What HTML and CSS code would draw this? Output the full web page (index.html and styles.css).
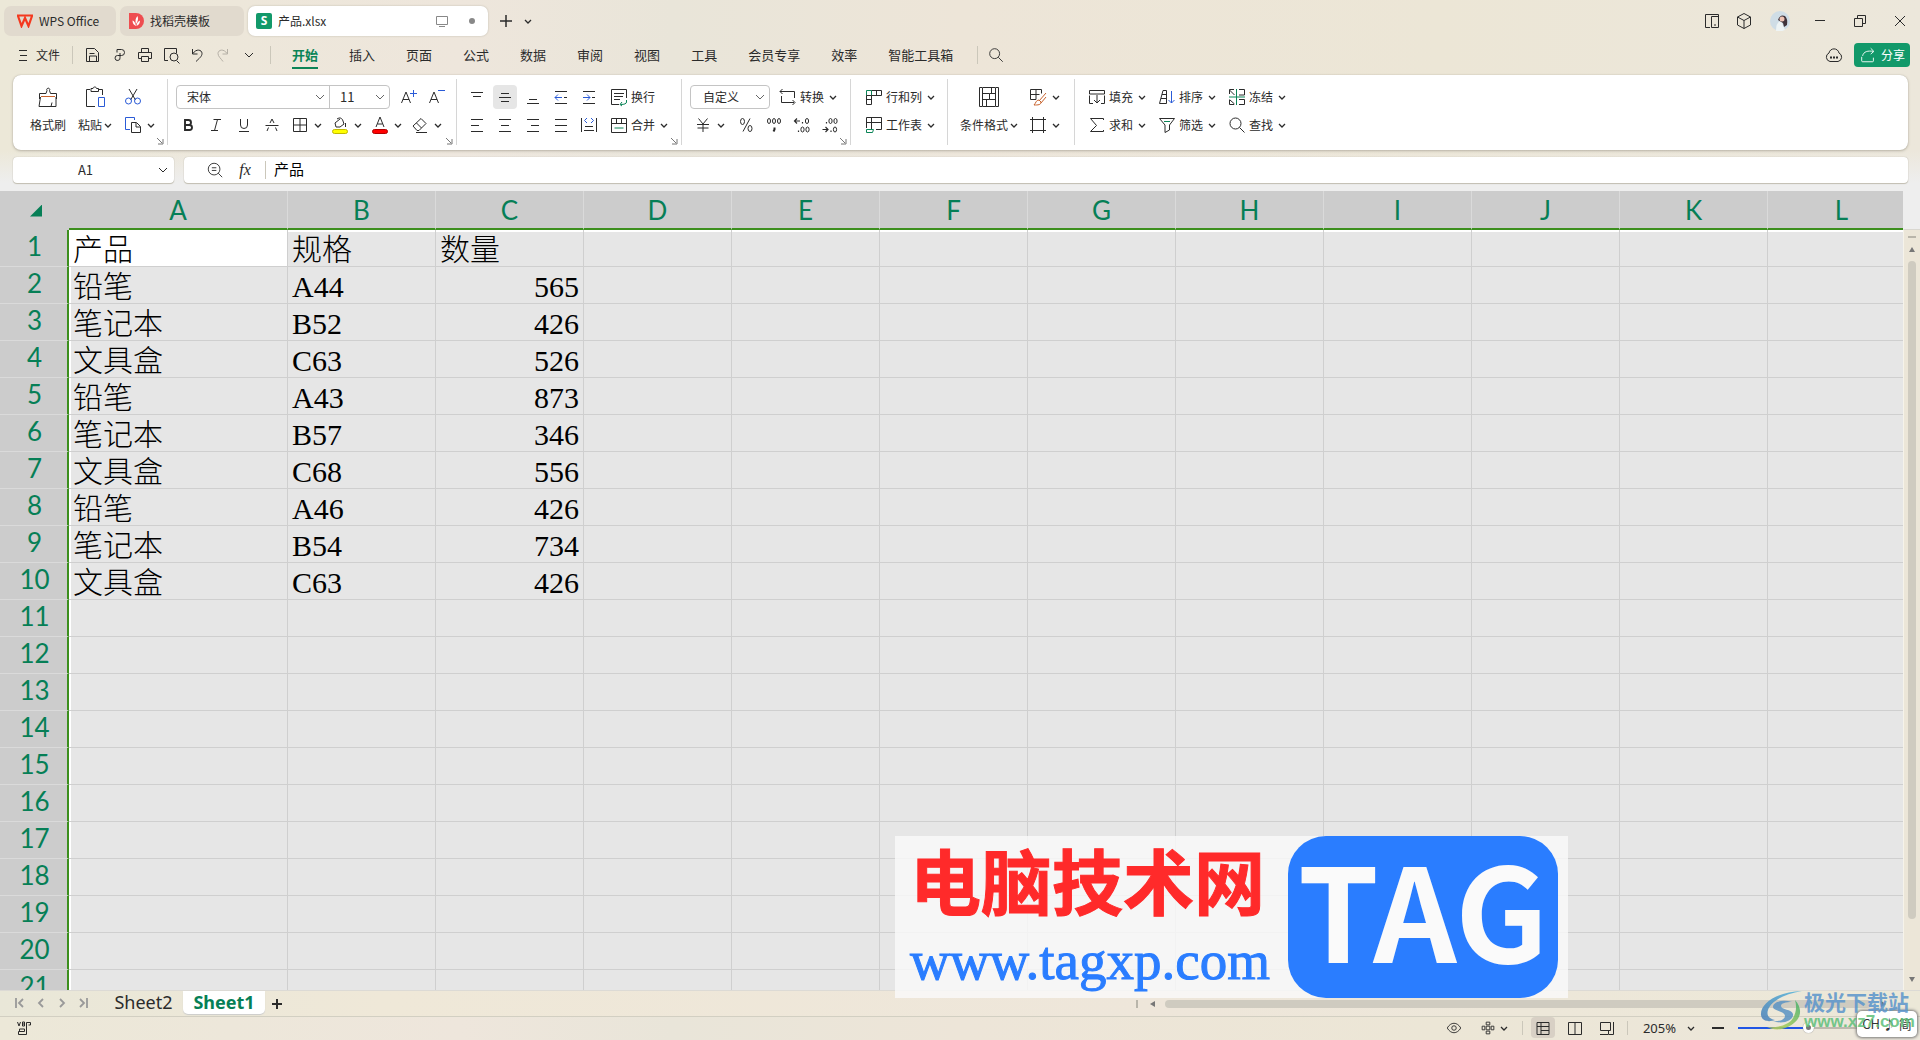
FILE: index.html
```html
<!DOCTYPE html>
<html lang="zh-CN">
<head>
<meta charset="utf-8">
<title>产品.xlsx - WPS Office</title>
<link rel="stylesheet" href="styles.css">
</head>
<body>
<svg class="sprite" aria-hidden="true">
  <symbol id="chev" viewBox="0 0 8 8"><path d="M1 3l3 3 3-3" stroke-width="1.300"/></symbol>
  <symbol id="launch" viewBox="0 0 8 8"><path d="M1 1l5 5M7 2v5H2"/></symbol>
  <symbol id="save" viewBox="0 0 20 20"><path d="M3.500 3.500h8l4 4v9h-12zM6.500 16v-5h7v5M6.500 8.500h5"/></symbol>
  <symbol id="link" viewBox="0 0 20 20"><path d="M8 7.500V4.500h4.500a3 3 0 0 1 0 6H10M11 8v4.500a2.500 2.500 0 1 1-2.500-2H11" /></symbol>
  <symbol id="print" viewBox="0 0 20 20"><path d="M6.500 7V3.500h7V7M6 13.500H3.500v-6h13v6H14M6.500 11.500h7v5h-7z"/></symbol>
  <symbol id="preview" viewBox="0 0 20 20"><path d="M7 15.500H3.500v-12h12V8M16 16l2.500 2.500"/><circle cx="13" cy="12" r="4"/></symbol>
  <symbol id="undo" viewBox="0 0 20 20"><path d="M5.500 4v5h5M6 8.500c3-5 9-4 9 0 0 3-3 5-6 8"/></symbol>
  <symbol id="redo" viewBox="0 0 20 20"><path d="M14.500 4v5h-5M14 8.500c-3-5-9-4-9 0 0 3 3 5 5 8"/></symbol>
  <symbol id="search" viewBox="0 0 20 20"><circle cx="8.500" cy="8.500" r="5.500"/><path d="M12.500 12.500l5 5"/></symbol>
  <symbol id="brush" viewBox="0 0 24 24"><path d="M3.500 14V8.500h6.500l1-3a1.500 1.500 0 1 1 2.500 0l1 3h6V14M4.500 12L3 21.500h17V12M15 21.500l1-4"/><path class="o" d="M5 11.500h14"/></symbol>
  <symbol id="paste" viewBox="0 0 24 24"><path d="M7 4.500H3.500v17H12M16 4.500h3.500V10M8 6.500v-3h2c0-2 3.500-2 3.500 0h2v3z"/><path class="b" d="M15.500 12.500h6v9h-6z"/></symbol>
  <symbol id="cut" viewBox="0 0 20 20"><path d="M6 2l6.500 11M14 2L7.500 13"/><circle class="b" cx="5.500" cy="14" r="3"/><circle class="b" cx="14.500" cy="14" r="3"/></symbol>
  <symbol id="copy" viewBox="0 0 20 20"><path class="b" d="M7 14.500H2.500v-12h9V5"/><path d="M8.500 7.500h5l4 4v6h-9zM13 8v4h4"/></symbol>
  <symbol id="aup" viewBox="0 0 20 20"><path d="M3.500 16L8 5l4.500 11M5 12.500h6"/><path class="b" d="M12 6.500h7M15.500 3v7"/></symbol>
  <symbol id="adn" viewBox="0 0 20 20"><path d="M3.500 16L8 5l4.500 11M5 12.500h6"/><path class="b" d="M12 3.500h7"/></symbol>
  <symbol id="bold" viewBox="0 0 20 20"><path d="M7 5h3.500a2.500 2.500 0 0 1 0 5H7zM7 10h4.500a2.500 2.500 0 0 1 0 5H7z" stroke-width="1.900"/></symbol>
  <symbol id="ital" viewBox="0 0 20 20"><path d="M7.500 4.500H15M5 15.500h7M11.500 4.500l-3 11"/></symbol>
  <symbol id="under" viewBox="0 0 20 20"><path d="M6.500 4v6a3.500 3.500 0 0 0 7 0V4M5 16.500h10"/></symbol>
  <symbol id="strike" viewBox="0 0 20 20"><path d="M3.500 10.500h13M8 8l2-4 2 4M6.500 12.500L5 16M13.500 12.500L15 16"/></symbol>
  <symbol id="border" viewBox="0 0 20 20"><path d="M3.500 3.500h13v13h-13zM10 3.500v13M3.500 10h13"/></symbol>
  <symbol id="fill" viewBox="0 0 20 20"><path d="M7 4c3-2 5-1 6 2l1 3-4 3H6L5 8l5-4M15.500 8v4"/><rect x="2.500" y="14.500" width="15" height="4" rx="2" fill="#ff0" stroke="#c2b900"/></symbol>
  <symbol id="fcol" viewBox="0 0 20 20"><path d="M6 12l4-10 4 10M7.500 9h5"/><rect x="2.500" y="14.500" width="15" height="4" rx="2" fill="#f00" stroke="#b00000"/></symbol>
  <symbol id="erase" viewBox="0 0 20 20"><path d="M3 11l8-7.500 5 5L9 15.500H7zM6.500 8l5 5M6 17.500h11"/></symbol>
  <symbol id="atop" viewBox="0 0 20 20"><path d="M4 5.500h12M6 9.500h8"/></symbol>
  <symbol id="amid" viewBox="0 0 20 20"><path d="M6 6.500h8M4 10.500h12M6 14.500h8"/></symbol>
  <symbol id="abot" viewBox="0 0 20 20"><path d="M6 12.500h8M4 16.500h12"/></symbol>
  <symbol id="al" viewBox="0 0 20 20"><path d="M4 4.500h12M4 10.500h8M4 16.500h12"/></symbol>
  <symbol id="ac" viewBox="0 0 20 20"><path d="M4 4.500h12M6 10.500h8M4 16.500h12"/></symbol>
  <symbol id="ar" viewBox="0 0 20 20"><path d="M4 4.500h12M8 10.500h8M4 16.500h12"/></symbol>
  <symbol id="aj" viewBox="0 0 20 20"><path d="M4 4.500h12M4 10.500h12M4 16.500h12"/></symbol>
  <symbol id="ad" viewBox="0 0 20 20"><path d="M2.500 3v14M17.500 3v14M6 11.500h8M5 15.500h10"/><path class="b" d="M8 3L5.500 5.500 8 8M12 3l2.500 2.500L12 8"/></symbol>
  <symbol id="ind1" viewBox="0 0 20 20"><path d="M4 4.500h12M4 16.500h12M13 10.500h3"/><path class="b" d="M11 10.500H4M7 7.500l-3 3 3 3"/></symbol>
  <symbol id="ind2" viewBox="0 0 20 20"><path d="M4 4.500h12M4 16.500h12M13 10.500h3"/><path class="b" d="M4 10.500h7M8 7.500l3 3-3 3"/></symbol>
  <symbol id="wrap" viewBox="0 0 20 20"><path d="M10 17.500H2.500v-15h15V11M5 6.500h10M5 9.500h9M5 12.500h6"/><path class="g" d="M17.500 13v2q0 2.500-6 2.500M13 15l-2 2.500 2 1.500"/></symbol>
  <symbol id="merge" viewBox="0 0 20 20"><path d="M2.500 3.500h15v14h-15zM2.500 8.500h15M7.500 3.500v5M12.500 3.500v5"/><path class="g" d="M5.500 13h9"/></symbol>
  <symbol id="conv" viewBox="0 0 20 20"><path d="M3.500 9v6.500H16M2 4.500h14.500V11M4.500 2L2 4.500 4.500 7M14.500 13l2.500 2.500-2.500 2.500"/></symbol>
  <symbol id="yen" viewBox="0 0 20 20"><path d="M5.500 3.500L10 9l4.500-5.500M10 9v8M4 9.500h12M4.500 13h11"/></symbol>
  <symbol id="pct" viewBox="0 0 20 20"><path d="M14 3.500L7 16.500"/><ellipse cx="6.500" cy="6.500" rx="2" ry="3"/><ellipse cx="14" cy="13.500" rx="2" ry="3"/></symbol>
  <symbol id="thou" viewBox="0 0 20 20"><ellipse cx="5" cy="6" rx="1.500" ry="2.500"/><ellipse cx="10" cy="6" rx="1.500" ry="2.500"/><ellipse cx="15" cy="6" rx="1.500" ry="2.500"/><path d="M10.500 12.500v2l-1 2" stroke-width="2"/></symbol>
  <symbol id="dec1" viewBox="0 0 20 20"><path d="M3 6h5M5 3.500L2.500 6 5 8.500M10.500 7v1.500M6.500 15.500v1.500" stroke-width="1.200"/><ellipse cx="15" cy="6" rx="1.600" ry="2.500"/><ellipse cx="10.500" cy="14.500" rx="1.600" ry="2.500"/><ellipse cx="15.500" cy="14.500" rx="1.600" ry="2.500"/></symbol>
  <symbol id="dec2" viewBox="0 0 20 20"><path d="M2.500 14.500h5M5.500 12l2.500 2.500L5.500 17M6.500 7v1.500M11 15.500v1.500" stroke-width="1.200"/><ellipse cx="10.500" cy="6" rx="1.600" ry="2.500"/><ellipse cx="15.500" cy="6" rx="1.600" ry="2.500"/><ellipse cx="15" cy="14.500" rx="1.600" ry="2.500"/></symbol>
  <symbol id="rc" viewBox="0 0 20 20"><path class="g" d="M2.500 3.500h5v5h-5z"/><path d="M7.500 3.500h10v5h-10M12.500 3.500v5M2.500 8.500h5v9h-5zM2.500 12.500h5"/></symbol>
  <symbol id="ws" viewBox="0 0 20 20"><path d="M2.500 13V2.500h15v12H12M2.500 7.500h15M7.500 2.500V14"/><path class="g" d="M2.500 14.500h7l-1 3h-6z"/></symbol>
  <symbol id="cf" viewBox="0 0 24 24"><path d="M5 2.500H2.500v19H5M19 2.500h2.500v19H19M5.500 2.500h13v19h-13zM5.500 8.500h7v6h6M5.500 14.500h7M12.500 8.500h6M9.500 14.500v7M14.500 2.500v6"/></symbol>
  <symbol id="tstyle" viewBox="0 0 20 20"><path d="M8 12.500H2.500v-10h11v4M2.500 7.500h9M8 2.500v10"/><path class="o" d="M18 6l-7 8M18 10l-5 6M11 13c-3 0-3 3-5 5 4 0 7 0 7-3z"/></symbol>
  <symbol id="frame" viewBox="0 0 20 20"><path d="M4.500 2v16M15.500 2v16M2 4.500h16M2 15.500h16"/></symbol>
  <symbol id="filld" viewBox="0 0 20 20"><path d="M6 16.500H2.500v-8M14 16.500h3.500v-8M2.500 7V3.500h15V7zM10 8v8M7 13l3 3 3-3"/></symbol>
  <symbol id="sum" viewBox="0 0 20 20"><path d="M16.500 5V3.500h-13l6 7-6 6h13V15"/></symbol>
  <symbol id="sort" viewBox="0 0 20 20"><path d="M2.500 16.500L6 3.500h3.500v13zM4 11.500h5.500M5 7.500h4.500"/><path class="b" d="M14.500 4v12M11.500 13l3 3 3-3"/></symbol>
  <symbol id="filter" viewBox="0 0 20 20"><path d="M2.500 3.500h15L12.500 10v5L8 17.500V10z"/><path class="g" d="M7 6.500h6"/></symbol>
  <symbol id="freeze" viewBox="0 0 20 20"><path d="M2.500 7V2.500H7M2.500 3l5 5M12 2.500h5.500V8H12M2.500 12.500v5H7M3 13l4.500 4M12 12.500h5.500v5H12"/><path class="g" d="M9.500 2v16M2 10h16"/></symbol>
  <symbol id="zoomo" viewBox="0 0 20 20"><circle cx="9" cy="9" r="6.500"/><path d="M13.500 13.500l4.500 4.500M6.500 7.500h5M6.500 10.500h5"/></symbol>
  <symbol id="cloud" viewBox="0 0 20 20"><path d="M6 16.500a4.500 4.500 0 0 1-1-8.500c1-5.500 9-5.500 10 0a4.500 4.500 0 0 1-1 8.500z"/><path d="M6 12.500h2M9 12.500h2M12 12.500h2" stroke-width="2"/></symbol>
  <symbol id="share" viewBox="0 0 20 20"><path d="M3 12v4.500q0 1 1 1h11q1 0 1-1V13M4 11c1-5 6-6 12-5M13 2.500L16.500 6 13 9"/></symbol>
  <symbol id="panel" viewBox="0 0 20 20"><path d="M8 16.500H3.500v-13h13v13H9.500V5.500h7M12 14h2"/></symbol>
  <symbol id="cube" viewBox="0 0 20 20"><path d="M10 2.500l6.500 3.500v8L10 17.500 3.500 14V6zM3.500 6l6.500 3.500L16.500 6M10 9.500v8"/></symbol>
  <symbol id="screen" viewBox="0 0 14 14"><path d="M1.500 2.500h11v8h-11zM4 12.500h6"/></symbol>
  <symbol id="restore" viewBox="0 0 14 14"><path d="M1.500 4.500h8v8h-8zM4.500 4V1.500h8v8H10"/></symbol>
  <symbol id="x" viewBox="0 0 14 14"><path d="M2 2l10 10M12 2L2 12"/></symbol>
  <symbol id="eye" viewBox="0 0 20 20"><path d="M2.500 10c4-7 11-7 15 0-4 7-11 7-15 0z"/><circle cx="10" cy="10" r="2.500"/></symbol>
  <symbol id="move" viewBox="0 0 20 20"><path d="M8 3.500h4v3H8zM8 13.500h4v3H8zM3.500 8h3v4h-3zM13.500 8h3v4h-3zM8 8h4v4H8z"/></symbol>
  <symbol id="v1" viewBox="0 0 20 20"><path d="M4 4.500h12v12H4zM4 8.500h12M8 4.500v12M8 12.500h8"/></symbol>
  <symbol id="v2" viewBox="0 0 20 20"><path d="M3.500 4.500h13v12h-13zM10 4.500v12"/></symbol>
  <symbol id="v3" viewBox="0 0 20 20"><path d="M3.500 4.500h10v8h-10zM16.500 4v12.500h-5v-4M3 16.500h8"/></symbol>
  <symbol id="vb" viewBox="0 0 16 16"><path d="M1.500 2l1.500 4 1.500-4M6.500 2h2v4h-2zM6.500 4h2M10.500 14.500v-12h4V5h-2M10.500 14.500h-8v-3h6V9h-5v2"/></symbol>
</svg>

<header class="titlebar">
  <nav class="doc-tabs">
    <button class="doc-tab home"><svg width="18" height="14" viewBox="0 0 18 14"><path d="M1 1.500h16M2 2l3.500 10L9 4l3.500 8L16 2" fill="none" stroke="#f4391f" stroke-width="2.200"/></svg>WPS Office</button>
    <button class="doc-tab shell"><svg width="16" height="16" viewBox="0 0 16 16"><path d="M1 0h7a8 8 0 0 1 0 16H1z" fill="#ee4d50"/><path d="M8 13Q4.500 11.500 4.500 7.500 7 8 8 13zM8 11Q6.500 6 9.500 3q1.500 4-1.500 8zM8.500 13q0-4 3.500-5.500 0 4-3.500 5.500z" fill="#fff"/></svg>找稻壳模板</button>
    <button class="doc-tab current"><span class="s-logo">S</span>产品.xlsx<svg class="i push" width="14" height="14"><use href="#screen"/></svg><i class="dot"></i></button>
  </nav>
  <button class="plain plus" aria-label="新建"><svg class="i" width="14" height="14" viewBox="0 0 14 14"><path d="M7 1v12M1 7h12" stroke-width="1.500"/></svg></button>
  <button class="plain" aria-label="标签列表"><svg class="i" width="8" height="8"><use href="#chev"/></svg></button>
  <div class="window-tools">
    <button class="plain w32" aria-label="侧栏"><svg class="i" width="20" height="20"><use href="#panel"/></svg></button>
    <button class="plain w32" aria-label="应用"><svg class="i" width="20" height="20"><use href="#cube"/></svg></button>
    <button class="plain w40" aria-label="账户"><svg width="20" height="20" viewBox="0 0 20 20"><circle cx="10" cy="10" r="10" fill="#cfdde6"/><path d="M6 20q0-9 5-10l4 9q-4 2-9 1" fill="#eef4f5"/><path d="M8 9q2-6 7-4 3 3 2 9l-3 2-1-4z" fill="#40333a"/><circle cx="12" cy="8" r="2.500" fill="#efc4b5"/></svg></button>
    <button class="plain w40" aria-label="最小化"><svg class="i" width="10" height="14" viewBox="0 0 10 14"><path d="M0 6.500h10"/></svg></button>
    <button class="plain w40" aria-label="还原"><svg class="i" width="14" height="14"><use href="#restore"/></svg></button>
    <button class="plain w40" aria-label="关闭"><svg class="i" width="14" height="14"><use href="#x"/></svg></button>
  </div>
</header>

<div class="menubar">
  <button class="plain file"><svg class="i" width="10" height="12" viewBox="0 0 10 12"><path d="M1 1.500h8M2 6.500h7M1 11.500h8"/></svg>文件</button>
  <i class="rule"></i>
  <div class="quick">
    <button class="plain" aria-label="保存"><svg class="i" width="20" height="20"><use href="#save"/></svg></button>
    <button class="plain" aria-label="输出"><svg class="i" width="20" height="20"><use href="#link"/></svg></button>
    <button class="plain" aria-label="打印"><svg class="i" width="20" height="20"><use href="#print"/></svg></button>
    <button class="plain" aria-label="预览"><svg class="i" width="20" height="20"><use href="#preview"/></svg></button>
    <button class="plain" aria-label="撤销"><svg class="i" width="20" height="20"><use href="#undo"/></svg></button>
    <button class="plain faded" aria-label="恢复"><svg class="i" width="20" height="20"><use href="#redo"/></svg></button>
    <button class="plain" aria-label="更多"><svg class="i" width="10" height="10" viewBox="0 0 10 10"><path d="M1 3l4 4 4-4"/></svg></button>
  </div>
  <i class="rule"></i>
  <nav class="tabs">
    <button class="plain on">开始</button><button class="plain">插入</button><button class="plain">页面</button><button class="plain">公式</button><button class="plain">数据</button><button class="plain">审阅</button><button class="plain">视图</button><button class="plain">工具</button><button class="plain">会员专享</button><button class="plain">效率</button><button class="plain">智能工具箱</button>
  </nav>
  <i class="rule"></i>
  <button class="plain find" aria-label="搜索"><svg class="i" width="18" height="18"><use href="#search"/></svg></button>
  <div class="menu-right">
    <button class="plain" aria-label="云"><svg class="i" width="20" height="20"><use href="#cloud"/></svg></button>
    <button class="share"><svg class="i" width="18" height="18"><use href="#share"/></svg>分享</button>
  </div>
</div>

<section class="ribbon" aria-label="开始">
  <div class="group g1">
    <div class="col brush"><button class="cmd" aria-label="格式刷图标"><svg class="i" width="24" height="24"><use href="#brush"/></svg></button><button class="cmd">格式刷</button></div>
    <div class="col pst"><button class="cmd" aria-label="粘贴图标"><svg class="i" width="24" height="24"><use href="#paste"/></svg></button><button class="cmd">粘贴<svg class="i c" width="8" height="8"><use href="#chev"/></svg></button></div>
    <div class="col start"><button class="cmd b28" aria-label="剪切"><svg class="i" width="20" height="20"><use href="#cut"/></svg></button><button class="cmd b40" aria-label="复制"><svg class="i" width="20" height="20"><use href="#copy"/></svg><svg class="i c" width="8" height="8"><use href="#chev"/></svg></button></div>
    <button class="launch" aria-label="剪贴板选项"><svg class="i" width="8" height="8"><use href="#launch"/></svg></button>
  </div>
  <div class="group g2">
    <div class="line">
      <div class="combo"><select class="font" aria-label="字体"><option>宋体</option></select><select class="size" aria-label="字号"><option>11</option></select></div>
      <button class="cmd b28" aria-label="增大字号"><svg class="i" width="20" height="20"><use href="#aup"/></svg></button><button class="cmd b28" aria-label="减小字号"><svg class="i" width="20" height="20"><use href="#adn"/></svg></button>
    </div>
    <div class="line">
      <button class="cmd b28" aria-label="加粗"><svg class="i" width="20" height="20"><use href="#bold"/></svg></button><button class="cmd b28" aria-label="倾斜"><svg class="i" width="20" height="20"><use href="#ital"/></svg></button><button class="cmd b28" aria-label="下划线"><svg class="i" width="20" height="20"><use href="#under"/></svg></button><button class="cmd b28" aria-label="删除线"><svg class="i" width="20" height="20"><use href="#strike"/></svg></button><button class="cmd b40" aria-label="边框"><svg class="i" width="20" height="20"><use href="#border"/></svg><svg class="i c" width="8" height="8"><use href="#chev"/></svg></button><button class="cmd b40" aria-label="填充颜色"><svg class="i" width="20" height="20"><use href="#fill"/></svg><svg class="i c" width="8" height="8"><use href="#chev"/></svg></button><button class="cmd b40" aria-label="字体颜色"><svg class="i" width="20" height="20"><use href="#fcol"/></svg><svg class="i c" width="8" height="8"><use href="#chev"/></svg></button><button class="cmd b40" aria-label="清除"><svg class="i" width="20" height="20"><use href="#erase"/></svg><svg class="i c" width="8" height="8"><use href="#chev"/></svg></button>
    </div>
    <button class="launch" aria-label="字体设置"><svg class="i" width="8" height="8"><use href="#launch"/></svg></button>
  </div>
  <div class="group g3">
    <div class="line">
      <button class="cmd b28" aria-label="顶端对齐"><svg class="i" width="20" height="20"><use href="#atop"/></svg></button><button class="cmd b28 pressed" aria-label="垂直居中"><svg class="i" width="20" height="20"><use href="#amid"/></svg></button><button class="cmd b28" aria-label="底端对齐"><svg class="i" width="20" height="20"><use href="#abot"/></svg></button><button class="cmd b28" aria-label="减少缩进"><svg class="i" width="20" height="20"><use href="#ind1"/></svg></button><button class="cmd b28" aria-label="增加缩进"><svg class="i" width="20" height="20"><use href="#ind2"/></svg></button><button class="cmd text"><svg class="i" width="20" height="20"><use href="#wrap"/></svg>换行</button>
    </div>
    <div class="line">
      <button class="cmd b28" aria-label="左对齐"><svg class="i" width="20" height="20"><use href="#al"/></svg></button><button class="cmd b28" aria-label="居中"><svg class="i" width="20" height="20"><use href="#ac"/></svg></button><button class="cmd b28" aria-label="右对齐"><svg class="i" width="20" height="20"><use href="#ar"/></svg></button><button class="cmd b28" aria-label="两端对齐"><svg class="i" width="20" height="20"><use href="#aj"/></svg></button><button class="cmd b28" aria-label="分散对齐"><svg class="i" width="20" height="20"><use href="#ad"/></svg></button><button class="cmd text"><svg class="i" width="20" height="20"><use href="#merge"/></svg>合并<svg class="i c" width="8" height="8"><use href="#chev"/></svg></button>
    </div>
    <button class="launch" aria-label="对齐设置"><svg class="i" width="8" height="8"><use href="#launch"/></svg></button>
  </div>
  <div class="group g4">
    <div class="line">
      <div class="combo"><select class="format" aria-label="数字格式"><option>自定义</option></select></div>
      <button class="cmd text"><svg class="i" width="20" height="20"><use href="#conv"/></svg>转换<svg class="i c" width="8" height="8"><use href="#chev"/></svg></button>
    </div>
    <div class="line">
      <button class="cmd b42" aria-label="货币"><svg class="i" width="20" height="20"><use href="#yen"/></svg><svg class="i c" width="8" height="8"><use href="#chev"/></svg></button><button class="cmd b28" aria-label="百分比"><svg class="i" width="20" height="20"><use href="#pct"/></svg></button><button class="cmd b28" aria-label="千位分隔"><svg class="i" width="20" height="20"><use href="#thou"/></svg></button><button class="cmd b28" aria-label="增加小数位"><svg class="i" width="20" height="20"><use href="#dec1"/></svg></button><button class="cmd b28" aria-label="减少小数位"><svg class="i" width="20" height="20"><use href="#dec2"/></svg></button>
    </div>
    <button class="launch" aria-label="数字设置"><svg class="i" width="8" height="8"><use href="#launch"/></svg></button>
  </div>
  <div class="group g5">
    <div class="line"><button class="cmd text"><svg class="i" width="20" height="20"><use href="#rc"/></svg>行和列<svg class="i c" width="8" height="8"><use href="#chev"/></svg></button></div>
    <div class="line"><button class="cmd text"><svg class="i" width="20" height="20"><use href="#ws"/></svg>工作表<svg class="i c" width="8" height="8"><use href="#chev"/></svg></button></div>
  </div>
  <div class="group g6">
    <div class="col"><button class="cmd" aria-label="条件格式图标"><svg class="i" width="24" height="24"><use href="#cf"/></svg></button><button class="cmd">条件格式<svg class="i c" width="8" height="8"><use href="#chev"/></svg></button></div>
    <div class="col start"><button class="cmd b40" aria-label="表格样式"><svg class="i" width="20" height="20"><use href="#tstyle"/></svg><svg class="i c" width="8" height="8"><use href="#chev"/></svg></button><button class="cmd b40" aria-label="单元格样式"><svg class="i" width="20" height="20"><use href="#frame"/></svg><svg class="i c" width="8" height="8"><use href="#chev"/></svg></button></div>
  </div>
  <div class="group g7">
    <div class="line"><button class="cmd text"><svg class="i" width="20" height="20"><use href="#filld"/></svg>填充<svg class="i c" width="8" height="8"><use href="#chev"/></svg></button><button class="cmd text"><svg class="i" width="20" height="20"><use href="#sort"/></svg>排序<svg class="i c" width="8" height="8"><use href="#chev"/></svg></button><button class="cmd text"><svg class="i" width="20" height="20"><use href="#freeze"/></svg>冻结<svg class="i c" width="8" height="8"><use href="#chev"/></svg></button></div>
    <div class="line"><button class="cmd text"><svg class="i" width="20" height="20"><use href="#sum"/></svg>求和<svg class="i c" width="8" height="8"><use href="#chev"/></svg></button><button class="cmd text"><svg class="i" width="20" height="20"><use href="#filter"/></svg>筛选<svg class="i c" width="8" height="8"><use href="#chev"/></svg></button><button class="cmd text"><svg class="i" width="20" height="20"><use href="#search"/></svg>查找<svg class="i c" width="8" height="8"><use href="#chev"/></svg></button></div>
  </div>
</section>

<div class="formula-row">
  <div class="name-box"><input type="text" value="A1" aria-label="名称框"><svg class="i" width="10" height="10" viewBox="0 0 10 10"><path d="M1 3l4 4 4-4"/></svg></div>
  <div class="formula"><button class="plain" aria-label="查看"><svg class="i" width="18" height="18"><use href="#zoomo"/></svg></button><button class="plain fx">fx</button><i class="rule"></i><input type="text" value="产品" aria-label="编辑栏"></div>
</div>

<main class="sheet">
  <div class="grid-wrap"><table class="grid"></table></div>
  <div class="vscroll"><i class="tick"></i><i class="arrow up"></i><i class="thumb"></i><i class="arrow down"></i></div>
</main>

<div class="sheetbar">
  <div class="nav">
    <button class="plain" aria-label="第一张"><svg class="i" width="10" height="12" viewBox="0 0 10 12"><path d="M1 1v10M8 2L4 6l4 4" stroke-width="1.800"/></svg></button>
    <button class="plain" aria-label="上一张"><svg class="i" width="10" height="12" viewBox="0 0 10 12"><path d="M7 2L3 6l4 4" stroke-width="1.800"/></svg></button>
    <button class="plain" aria-label="下一张"><svg class="i" width="10" height="12" viewBox="0 0 10 12"><path d="M3 2l4 4-4 4" stroke-width="1.800"/></svg></button>
    <button class="plain" aria-label="最后一张"><svg class="i" width="10" height="12" viewBox="0 0 10 12"><path d="M9 1v10M2 2l4 4-4 4" stroke-width="1.800"/></svg></button>
  </div>
  <button class="sheet-tab">Sheet2</button>
  <button class="sheet-tab active">Sheet1</button>
  <button class="plain add" aria-label="新建工作表"><svg class="i" width="10" height="10" viewBox="0 0 10 10"><path d="M5 0v10M0 5h10" stroke-width="2"/></svg></button>
  <div class="hscroll"><i class="tick"></i><i class="arrow left"></i><i class="thumb"></i><i class="arrow right"></i></div>
</div>

<footer class="status">
  <button class="plain" aria-label="VB"><svg class="i" width="16" height="16"><use href="#vb"/></svg></button>
  <div class="status-right">
    <button class="plain eye" aria-label="护眼"><svg class="i" width="18" height="18"><use href="#eye"/></svg></button>
    <button class="plain mv" aria-label="定位"><svg class="i" width="18" height="18"><use href="#move"/></svg><svg class="i c" width="8" height="8"><use href="#chev"/></svg></button>
    <i class="rule"></i>
    <div class="views"><button class="plain pressed" aria-label="普通视图"><svg class="i" width="20" height="20"><use href="#v1"/></svg></button><button class="plain" aria-label="分页预览"><svg class="i" width="20" height="20"><use href="#v2"/></svg></button><button class="plain" aria-label="页面布局"><svg class="i" width="20" height="20"><use href="#v3"/></svg></button></div>
    <i class="rule"></i>
    <button class="plain pctv">205%<svg class="i" width="8" height="8"><use href="#chev"/></svg></button>
    <button class="plain" aria-label="缩小"><svg class="i" width="12" height="12" viewBox="0 0 12 12"><path d="M0 6h12" stroke-width="2"/></svg></button>
    <input class="zoom" type="range" min="0" max="100" value="51" aria-label="缩放">
  </div>
</footer>

<aside class="promo">
  <div class="promo-text"><strong>电脑技术网</strong><span>www.tagxp.com</span></div>
  <div class="promo-tag">TAG</div>
</aside>
<aside class="ime">CH ♪ 简</aside>
<aside class="site-mark">
  <svg width="44" height="42" viewBox="0 0 44 42"><defs><linearGradient id="lg1" x1="0" y1="1" x2="1" y2="0"><stop offset="0" stop-color="#4b7fb8"/><stop offset="1" stop-color="#4fb4dc"/></linearGradient><linearGradient id="lg2" x1="0" y1="1" x2="1" y2="0"><stop offset="0" stop-color="#cfd84e"/><stop offset="1" stop-color="#3fae6b"/></linearGradient></defs><path d="M42 1C16 2 0 14 1 25c1 7 9 7 14 5-5-1-9-4-7-10C11 11 24 4 42 1z" fill="url(#lg1)"/><path d="M35 10c10 11 5 24-13 29-6 1-11 0-15-2 11 1 22-2 26-9 3-5 4-11 2-18z" fill="url(#lg2)"/><path d="M32 12c-10-3-19 0-19 5 0 4 12 4 12 9 0 4-7 6-13 5 12 4 22-1 21-7-1-5-12-4-12-8 0-3 5-4 11-4z" fill="#5a93c4"/></svg>
  <div><b>极光下载站</b><span>www.xz7.com</span></div>
</aside>
<script src="grid.js"></script>
</body>
</html>
```
FILE: styles.css
```css
* { box-sizing: border-box; }
html { height: 100%; overflow: hidden; }
body {
  height: 100%; margin: 0; display: flex; flex-direction: column; position: relative; overflow: hidden;
  font: 12px/16px "Noto Sans CJK SC", sans-serif; color: #2b2b2b;
  background: linear-gradient(90deg, #ece8d8, #eee6dc 24%, #e9e5d9 35%, #ede5d8 50%, #ece6d6 75%, #ece7db);
}
button, input, select { font: inherit; color: inherit; }
button { border: 0; padding: 0; margin: 0; background: none; display: flex; align-items: center; justify-content: center; white-space: nowrap; }
input { border: 0; background: none; outline: 0; padding: 0; margin: 0; }
.sprite { position: absolute; width: 0; height: 0; }
.i, symbol { fill: none; stroke: currentColor; }
.i { flex: none; }
.b { stroke: #2a5bd7; } .g { stroke: #0b8457; } .o { stroke: #c8622c; }
.rule { width: 1px; height: 18px; background: #cbc7ba; flex: none; }

.titlebar { display: flex; align-items: center; height: 40px; padding: 2px 0 0 4px; flex: none; }
.doc-tabs { display: flex; gap: 4px; }
.doc-tab { height: 30px; border-radius: 7px; background: #e1dace; justify-content: flex-start; }
.home { width: 112px; padding-left: 12px; gap: 5px; }
.shell { width: 124px; padding-left: 8px; gap: 6px; }
.current { width: 240px; padding: 0 13px 0 8px; gap: 6px; background: #fff; box-shadow: 0 0 2px #bbb5a8; }
.s-logo { width: 16px; height: 16px; background: #12996a; color: #fff; border-radius: 2px; font: bold 12px/16px "Noto Sans", sans-serif; text-align: center; }
.push { margin-left: auto; color: #888; }
.dot { width: 6px; height: 6px; margin-left: 14px; border-radius: 50%; background: #888; }
.plus { width: 36px; }
.window-tools { display: flex; margin-left: auto; }
.w32 { width: 32px; } .w40 { width: 40px; }
.titlebar .w40, .titlebar .w32 { height: 30px; }

.menubar { display: flex; align-items: center; height: 34px; flex: none; padding: 0 10px 4px 18px; }
.file { gap: 8px; margin-right: 12px; }
.quick { display: flex; padding: 0 8px 0 7px; }
.quick button { width: 26px; }
.faded { color: #b5b0a6; }
.tabs { display: flex; gap: 31px; padding: 0 24px 0 21px; }
.tabs button { font-size: 13px; height: 28px; border-bottom: 2px solid transparent; border-top: 2px solid transparent; }
.tabs .on { color: #0b8457; font-weight: bold; border-bottom-color: #0b8457; }
.find { margin-left: 9px; }
.menu-right { display: flex; align-items: center; gap: 10px; margin-left: auto; }
.share { width: 56px; height: 24px; border-radius: 4px; gap: 4px; background: #12996a; color: #fff; }

.ribbon { display: flex; flex: none; height: 75px; margin: 1px 12px 0 13px; padding: 4px 0; background: #fff; border-radius: 8px; box-shadow: 0 0 1px #a9a494, 0 1px 3px #b9b4a6; }
.group { position: relative; flex: none; border-right: 1px solid #d6d6d6; padding-top: 4px; height: 66px; }
.g1 { display: flex; width: 155px; padding-left: 12px; }
.g2 { width: 289px; padding-left: 6px; }
.g3 { width: 225px; padding-left: 6px; }
.g4 { width: 169px; padding-left: 7px; }
.g5 { width: 97px; padding-left: 7px; }
.g6 { display: flex; width: 127px; padding-left: 12px; gap: 6px; }
.g7 { padding-left: 6px; border: 0; }
.col { display: flex; flex-direction: column; align-items: center; }
.brush { width: 46px; } .pst { width: 48px; }
.start { align-items: flex-start; }
.line { display: flex; align-items: center; }
.cmd { height: 28px; border-radius: 4px; }
.cmd .c { margin-left: 2px; }
.b28 { width: 28px; }
.b40 { width: 40px; justify-content: flex-start; padding-left: 4px; }
.b42 { width: 43px; justify-content: flex-start; padding-left: 4px; }
.b40 .c, .b42 .c { margin-left: 4px; }
.text { gap: 2px; padding-left: 6px; justify-content: flex-start; min-width: 70px; }
.text .c { margin-left: 3px; }
.cmd.pressed { width: 24px; height: 24px; margin: 0 2px; background: #e6e6e6; }
.launch { position: absolute; right: 3px; bottom: 0; color: #777; }
.combo { display: flex; height: 24px; border: 1px solid #c4c4c4; border-radius: 4px; }
.g2 .combo { margin: 0 4px 0 2px; }
.g4 .combo { margin: 0 2px 0 1px; }
.combo select {
  appearance: none; border: 0; outline: 0; padding: 0 0 0 10px;
  background: url("data:image/svg+xml,%3Csvg xmlns='http://www.w3.org/2000/svg' width='10' height='10'%3E%3Cpath d='M1 3l4 4 4-4' fill='none' stroke='%23666'/%3E%3C/svg%3E") no-repeat right 4px center;
}
.font { width: 152px; }
.combo .size { width: 60px; border-left: 1px solid #c4c4c4; font-size: 13px; }
.combo .format { width: 78px; padding-left: 12px; }

.formula-row { display: flex; gap: 10px; flex: none; height: 41px; padding: 7px 12px 8px 13px; background: linear-gradient(transparent, #eee 80%); }
.name-box, .formula { display: flex; align-items: center; height: 26px; background: #fff; border-radius: 4px; box-shadow: 0 0 1px #a9a494, 0 1px 1px #c4c0b4; }
.name-box { width: 161px; padding-right: 6px; }
.name-box input { flex: 1; min-width: 0; text-align: center; font-size: 13px; }
.formula { flex: 1; padding-left: 22px; }
.fx { width: 36px; margin: 0 2px 0 3px; font: italic 16px/20px "Liberation Serif", serif; }
.formula input { flex: 1; margin-left: 8px; padding-bottom: 2px; font-size: 15px; color: #000; }

.sheet { display: flex; flex: 1; min-height: 0; }
.grid-wrap { flex: 1; min-width: 0; overflow: hidden; background: #e6e6e6; }
.grid { table-layout: fixed; width: 1916px; border-spacing: 0; }
.grid .c-head { width: 69px; } .grid .c-a { width: 219px; } .grid .c-n { width: 148px; }
.grid th { padding: 0 0 4px 2px; background: #ccc; color: #067f56; font: 26px/32px Lato, sans-serif; border-bottom: 1px solid #dadada; }
.grid thead th { height: 39px; padding: 0; border-right: 1px solid #dadada; border-bottom: 2px solid #3c8f1e; }
.grid thead th.corner { border-right: 0; border-bottom-color: #ccc; }
.corner i { display: block; width: 12px; height: 12px; margin: 2px 0 0 30px; background: #067f56; clip-path: polygon(100% 0, 100% 100%, 0 100%); }
.grid tbody th { border-right: 2px solid #3c8f1e; }
.grid td { height: 37px; padding: 3px 4px 0; border-right: 1px solid #cfcfcf; border-bottom: 1px solid #cfcfcf; font: 300 30px/32px "Liberation Serif", "Noto Sans CJK SC", serif; color: #000; white-space: nowrap; }
.grid td:nth-child(2) { box-shadow: inset 2px 0 #fff; }
.grid tbody tr:first-child td { box-shadow: inset 0 2px #fff; }
.grid tbody tr:first-child td:nth-child(2) { background: #fff; }
.grid td:nth-child(4) { text-align: right; }
.grid tbody tr:first-child td:nth-child(4) { text-align: left; }
.vscroll { width: 17px; display: flex; flex-direction: column; align-items: center; margin-top: 38px; padding: 6px 0 8px; border-left: 1px solid #f6f3ea; border-top: 1px solid #d9d7d0; background: #ece6d8; box-shadow: 0 -38px #eee; }
.vscroll .tick { width: 8px; height: 2px; background: #b9b5aa; }
.arrow { border: 3px solid transparent; flex: none; }
.up { border-bottom: 5px solid #777; border-top: 0; margin-top: 9px; }
.down { border-top: 5px solid #777; border-bottom: 0; }
.vscroll .thumb { width: 8px; flex: 0 1 658px; min-height: 0; margin: 9px 0 auto; border-radius: 4px; background: #cfcbc0; }

.sheetbar { display: flex; flex: none; height: 27px; border-top: 1px solid #dcdad5; border-bottom: 1px solid #d2cfc2; background: linear-gradient(90deg, #e9e7d8, #efe8d8 20%, #eee6da 60%, #ece8d8); }
.nav { display: flex; gap: 11px; padding: 0 0 2px 15px; width: 104px; color: #999; }
.sheet-tab { height: 23px; padding: 0 0 2px; width: 79px; font: 18px/20px "Noto Sans", sans-serif; }
.sheet-tab.active { width: 82px; background: #fff; border-radius: 0 0 5px 5px; font-weight: bold; color: #067f56; box-shadow: 0 1px 1px #ccc; }
.add { margin: 0 0 0 7px; }
.hscroll { display: flex; align-items: center; width: 784px; margin-left: auto; padding: 0 34px 0 0; }
.hscroll .tick { width: 2px; height: 8px; background: #b9b5aa; }
.left { border-right: 5px solid #777; border-left: 0; margin-left: 12px; }
.right { border-left: 5px solid #777; border-right: 0; }
.hscroll .thumb { flex: 1; height: 8px; margin: 0 10px; border-radius: 4px; background: #cfcbc0; }

.status { display: flex; flex: none; align-items: center; height: 23px; padding: 0 44px 2px 16px; }
.status-right { display: flex; align-items: center; margin-left: auto; }
.status .rule { height: 14px; }
.eye { margin-right: 16px; }
.mv { gap: 3px; margin-right: 14px; }
.views { display: flex; gap: 8px; margin: 0 8px; }
.views button { width: 24px; height: 21px; border-radius: 4px; }
.views .pressed { background: #d8d0c5; }
.pctv { gap: 11px; margin: 0 17px 0 15px; font: 13px/16px "Noto Sans", sans-serif; }
.zoom { appearance: none; width: 138px; height: 12px; margin-left: 14px; background: linear-gradient(90deg, #2055e5 50%, #bdb9ae 50%) center / 100% 2px no-repeat; }
.zoom::-webkit-slider-thumb { appearance: none; width: 11px; height: 11px; border-radius: 50%; background: #777; border: 3px solid #fff; box-shadow: 0 0 1px #777; }

.promo { position: absolute; right: 352px; bottom: 42px; width: 673px; height: 162px; display: flex; background: rgba(250, 250, 250, .8); }
.promo-text { flex: 1; padding: 0 0 0 15px; display: flex; flex-direction: column; }
.promo-text strong { font: bold 71px/84px "Noto Sans CJK SC", sans-serif; color: #ff2a2a; -webkit-text-stroke: 1px #ff2a2a; }
.promo-text span { font: 55px/82px "Liberation Serif", serif; color: #2a7dff; -webkit-text-stroke: 1px #2a7dff; }
.promo-tag { width: 270px; margin-right: 10px; border-radius: 38px; background: #2a7dff; color: #fafafa; text-align: center; font: bold 130px/140px "Noto Sans CJK SC", sans-serif; }
.ime { position: absolute; right: 3px; bottom: 3px; width: 60px; height: 26px; border-radius: 5px; background: #fff; box-shadow: 0 0 3px 1px #777; text-align: center; font-size: 13px; line-height: 25px; color: #333; }
.site-mark { position: absolute; right: 0; bottom: 8px; display: flex; width: 160px; opacity: .85; }
.site-mark svg { flex: none; }
.site-mark b { display: block; font-size: 21px; line-height: 22px; color: #5b95cc; }
.site-mark span { display: block; font: bold 17px/20px "Liberation Sans", sans-serif; color: #5fc07a; }
```
FILE: grid.js
```js
const rows = [
  ["产品", "规格", "数量"], ["铅笔", "A44", 565], ["笔记本", "B52", 426], ["文具盒", "C63", 526],
  ["铅笔", "A43", 873], ["笔记本", "B57", 346], ["文具盒", "C68", 556], ["铅笔", "A46", 426],
  ["笔记本", "B54", 734], ["文具盒", "C63", 426]
];
const letters = [..."ABCDEFGHIJKL"];
let html = '<colgroup><col class="c-head"><col class="c-a">' + '<col class="c-n">'.repeat(11) + "</colgroup>";
html += '<thead><tr><th class="corner"><i></i></th>' + letters.map(l => `<th scope="col">${l}</th>`).join("") + "</tr></thead><tbody>";
for (let r = 0; r < 21; r++) {
  html += `<tr><th scope="row">${r + 1}</th>` + letters.map((l, c) => `<td>${(rows[r] || [])[c] ?? ""}</td>`).join("") + "</tr>";
}
document.querySelector(".grid").innerHTML = html + "</tbody>";
```
